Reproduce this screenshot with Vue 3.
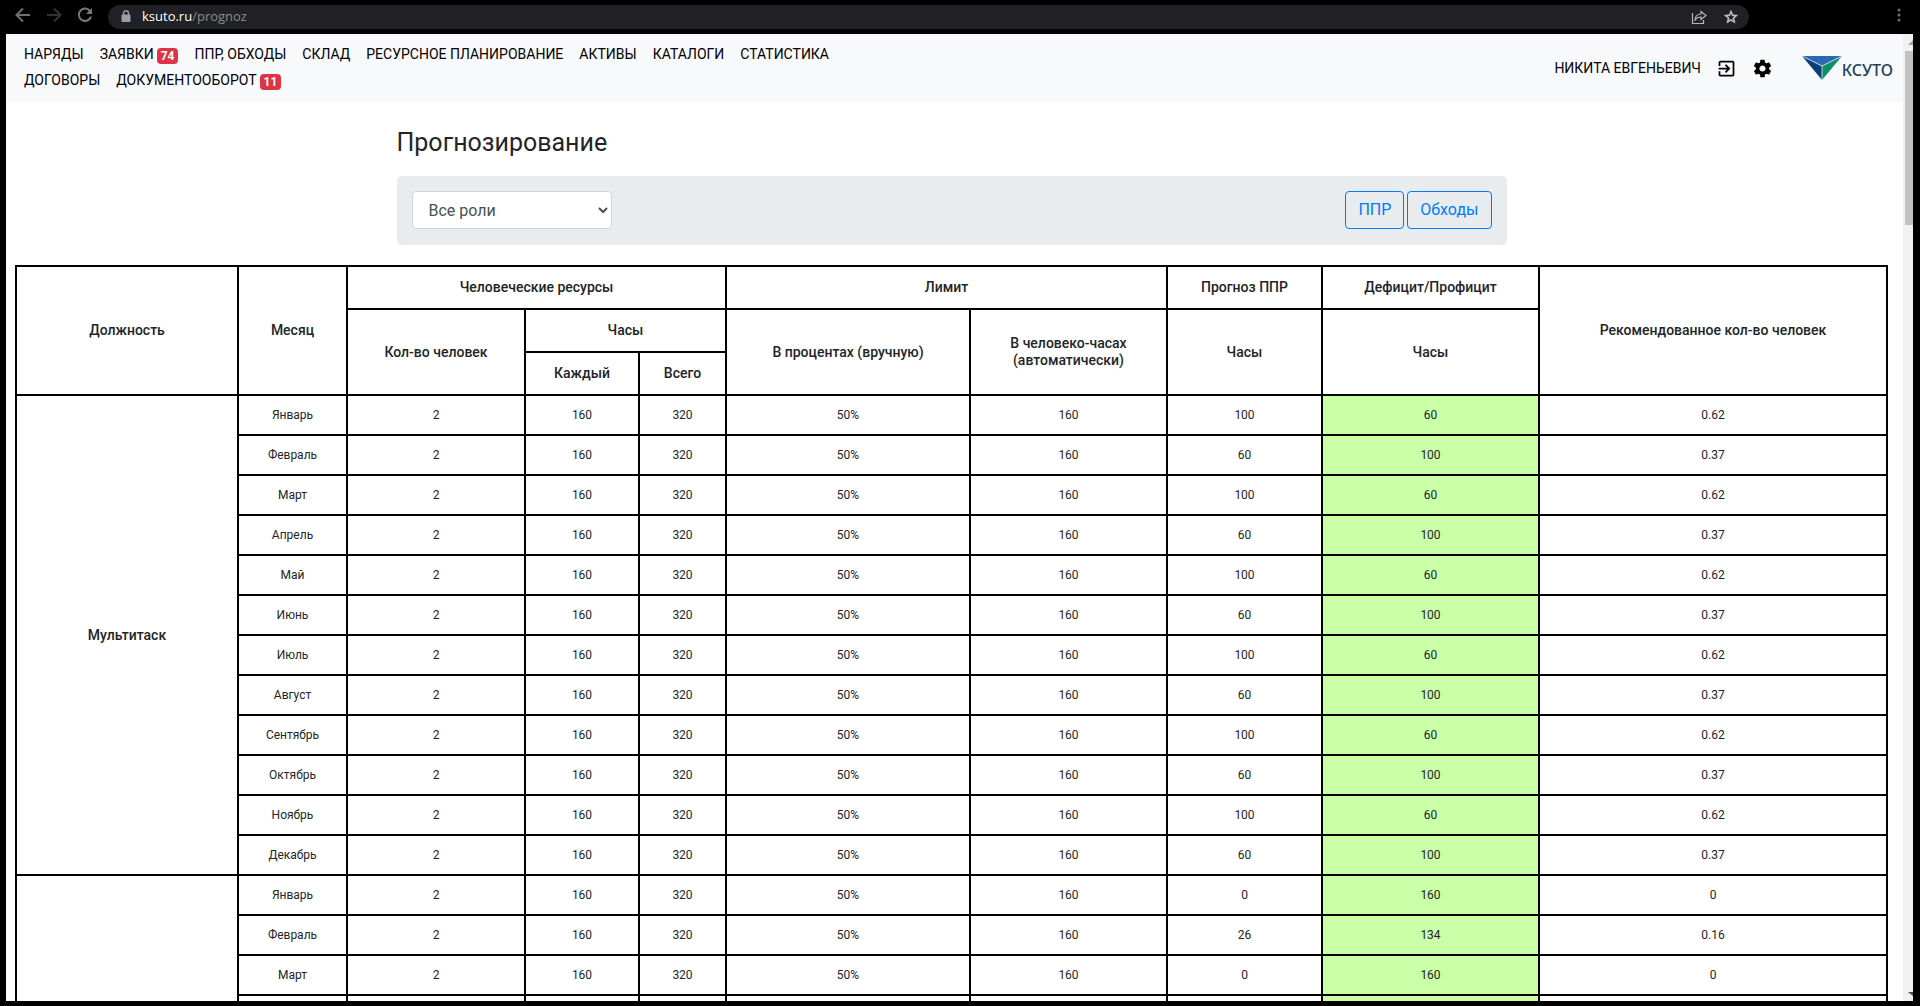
<script setup>
import { ref } from 'vue'

const links = [
  [
    { title: 'НАРЯДЫ' },
    { title: 'ЗАЯВКИ', count: 74 },
    { title: 'ППР, ОБХОДЫ' },
    { title: 'СКЛАД' },
    { title: 'РЕСУРСНОЕ ПЛАНИРОВАНИЕ' },
    { title: 'АКТИВЫ' },
    { title: 'КАТАЛОГИ' },
    { title: 'СТАТИСТИКА' },
  ],
  [{ title: 'ДОГОВОРЫ' }, { title: 'ДОКУМЕНТООБОРОТ', count: 11 }],
]

const role = ref('all')

const months = ['Январь', 'Февраль', 'Март', 'Апрель', 'Май', 'Июнь', 'Июль', 'Август', 'Сентябрь', 'Октябрь', 'Ноябрь', 'Декабрь']

// month, people, hours each, hours total, limit %, limit hours, planned hours, balance, advised people
const makeRow = (month, plan, advice) => [month, 2, 160, 320, '50%', 160, plan, 160 - plan, advice]
const emptyRow = Array(9).fill('')
const BALANCE = 7

const groups = [
  {
    title: 'Мультитаск',
    rows: months.map((m, i) => (i % 2 ? makeRow(m, 60, '0.37') : makeRow(m, 100, '0.62'))),
  },
  {
    title: '',
    rows: [makeRow('Январь', 0, '0'), makeRow('Февраль', 26, '0.16'), makeRow('Март', 0, '0'), emptyRow],
  },
]
</script>

<template>
  <div class="browser">
    <header class="chrome">
      <button class="tool" type="button" aria-label="Назад">
        <svg width="16" height="16" viewBox="0 0 16 16" fill="none" stroke="#6f7072" stroke-width="2"><path d="M15 8H2M8 1.5L1.5 8 8 14.5" /></svg>
      </button>
      <button class="tool" type="button" aria-label="Вперёд">
        <svg width="16" height="16" viewBox="0 0 16 16" fill="none" stroke="#323335" stroke-width="2"><path d="M1 8h13M8 1.500L14.500 8 8 14.500" /></svg>
      </button>
      <button class="tool" type="button" aria-label="Обновить">
        <svg width="16" height="16" viewBox="0 0 16 16"><path d="M13.200 4.200A6.200 6.200 0 1 0 14 9.600" fill="none" stroke="#77787a" stroke-width="2" /><path d="M15 1v6H9z" fill="#77787a" /></svg>
      </button>
      <div class="address">
        <svg class="lock" width="10" height="13" viewBox="0 0 10 13"><path d="M2.500 5V3.300a2.500 2.500 0 0 1 5 0V5" fill="none" stroke="#9aa0a6" stroke-width="1.400" /><rect x="0.500" y="4.500" width="9" height="7.500" rx="1" fill="#9aa0a6" /></svg>
        <span class="url"><span class="host">ksuto.ru</span>/prognoz</span>
        <button class="tool share" type="button" aria-label="Поделиться">
          <svg width="16" height="15" viewBox="0 0 16 15" fill="none" stroke="#b4b6b8" stroke-width="1.200"><path d="M1.500 3v10.500h11V10" /><path d="M4 10c.4-4 2.500-6 6-6V1.500L15 5.500l-5 4V7C7.500 7 5.500 8 4 10z" /></svg>
        </button>
        <button class="tool star" type="button" aria-label="В закладки">
          <svg width="16" height="16" viewBox="0 0 24 24" fill="#c6c8ca"><path d="M22 9.240l-7.190-.62L12 2 9.190 8.630 2 9.240l5.460 4.730L5.820 21 12 17.270 18.180 21l-1.630-7.030L22 9.240zM12 15.400l-3.760 2.270 1-4.280-3.320-2.880 4.380-.38L12 6.100l1.710 4.040 4.380.38-3.320 2.880 1 4.280L12 15.400z" stroke="#c6c8ca" stroke-width=".8" /></svg>
        </button>
      </div>
      <button class="tool" type="button" aria-label="Меню">
        <svg width="4" height="14" viewBox="0 0 4 14" fill="#6f7072"><circle cx="2" cy="2" r="1.500" /><circle cx="2" cy="7" r="1.500" /><circle cx="2" cy="12" r="1.500" /></svg>
      </button>
    </header>

    <div class="viewport">
      <div class="page">
        <div class="navbar">
          <nav class="nav">
            <ul v-for="(line, i) in links" :key="i" class="nav-line">
              <li v-for="link in line" :key="link.title">
                <a href="#">{{ link.title }}<span v-if="link.count" class="badge">{{ link.count }}</span></a>
              </li>
            </ul>
          </nav>
          <div class="account">
            <a href="#">НИКИТА ЕВГЕНЬЕВИЧ</a>
            <a class="icon" href="#" aria-label="Выход">
              <svg width="21" height="21" viewBox="0 0 24 24"><path d="M10.090 15.590L11.500 17l5-5-5-5-1.410 1.410L12.670 11H3v2h9.670l-2.580 2.590zM19 3H5c-1.110 0-2 .9-2 2v4h2V5h14v14H5v-4H3v4c0 1.100.89 2 2 2h14c1.100 0 2-.9 2-2V5c0-1.100-.9-2-2-2z" /></svg>
            </a>
            <a class="icon" href="#" aria-label="Настройки">
              <svg width="21" height="21" viewBox="0 0 24 24"><path d="M19.430 12.980c.04-.32.07-.64.07-.98s-.03-.66-.07-.98l2.110-1.650c.19-.15.24-.42.12-.64l-2-3.460c-.12-.22-.39-.3-.61-.22l-2.490 1c-.52-.4-1.080-.73-1.690-.98l-.38-2.650C14.460 2.180 14.250 2 14 2h-4c-.25 0-.46.18-.49.42l-.38 2.650c-.61.25-1.170.59-1.690.98l-2.490-1c-.23-.09-.49 0-.61.22l-2 3.460c-.13.22-.07.49.12.64l2.110 1.650c-.04.32-.07.65-.07.98s.03.66.07.98l-2.110 1.650c-.19.15-.24.42-.12.64l2 3.460c.12.22.39.3.61.22l2.490-1c.52.4 1.080.73 1.690.98l.38 2.650c.03.24.24.42.49.42h4c.25 0 .46-.18.49-.42l.38-2.650c.61-.25 1.170-.59 1.690-.98l2.490 1c.23.09.49 0 .61-.22l2-3.460c.12-.22.07-.49-.12-.64l-2.110-1.650zM12 15.500c-1.930 0-3.500-1.570-3.500-3.500s1.570-3.500 3.500-3.500 3.500 1.570 3.500 3.500-1.570 3.500-3.500 3.500z" /></svg>
            </a>
            <a class="logo" href="#">
              <svg width="40" height="24" viewBox="0 0 40 24"><path d="M0 0h40L20 10z" fill="#2a6ab5" /><path d="M0 0l20 10v14z" fill="#0b3f7c" /><path d="M40 0L20 10v14z" fill="#0a9163" /><path d="M0 0l20 10L40 0M20 10v14" fill="none" stroke="#dfe8f2" stroke-width=".8" /></svg>
              <span>КСУТО</span>
            </a>
          </div>
        </div>

        <main class="content">
          <section class="container">
            <h1>Прогнозирование</h1>
            <div class="filters">
              <select v-model="role" aria-label="Роль">
                <option value="all">Все роли</option>
              </select>
              <div class="actions">
                <button class="btn" type="button">ППР</button>
                <button class="btn" type="button">Обходы</button>
              </div>
            </div>
          </section>

          <table class="forecast">
            <colgroup>
              <col class="c-post" /><col class="c-month" /><col class="c-people" /><col class="c-each" /><col class="c-total" />
              <col class="c-percent" /><col class="c-limit" /><col class="c-plan" /><col class="c-rest" /><col class="c-advice" />
            </colgroup>
            <thead>
              <tr>
                <th rowspan="3">Должность</th>
                <th rowspan="3">Месяц</th>
                <th colspan="3">Человеческие ресурсы</th>
                <th colspan="2">Лимит</th>
                <th>Прогноз ППР</th>
                <th>Дефицит/Профицит</th>
                <th rowspan="3">Рекомендованное кол-во человек</th>
              </tr>
              <tr>
                <th rowspan="2">Кол-во человек</th>
                <th colspan="2">Часы</th>
                <th rowspan="2">В процентах (вручную)</th>
                <th rowspan="2">В человеко-часах<br />(автоматически)</th>
                <th rowspan="2">Часы</th>
                <th rowspan="2">Часы</th>
              </tr>
              <tr>
                <th>Каждый</th>
                <th>Всего</th>
              </tr>
            </thead>
            <tbody v-for="(group, g) in groups" :key="g">
              <tr v-for="(row, r) in group.rows" :key="r">
                <th v-if="r === 0" :rowspan="group.rows.length">{{ group.title }}</th>
                <td v-for="(cell, c) in row" :key="c" :class="{ surplus: c === BALANCE }">{{ cell }}</td>
              </tr>
            </tbody>
          </table>
        </main>
      </div>

      <div class="scrollbar" aria-hidden="true">
        <svg class="arrow" width="10" height="17" viewBox="0 0 10 17"><path d="M5 11h5V6z" fill="#a3a3a3" /></svg>
        <div class="thumb"></div>
        <svg class="arrow" width="10" height="17" viewBox="0 0 10 17"><path d="M5 8h5v4z" fill="#505050" /></svg>
      </div>
    </div>
  </div>
</template>

<style>
body {
  margin: 0;
  background: #000;
}
</style>

<style scoped>
* {
  box-sizing: border-box;
}
.browser {
  display: flex;
  flex-direction: column;
  height: 100vh;
  padding: 0 7px 5px 6px;
  overflow: hidden;
  background: #000;
  color: #212529;
  font-family: Roboto, "Liberation Sans", sans-serif;
  font-size: 16px;
}
a {
  color: #000;
  text-decoration: none;
}
.chrome {
  display: flex;
  align-items: center;
  flex: none;
  gap: 15px;
  height: 34px;
  padding: 0 12px 4px 9px;
}
.chrome > .tool:last-child {
  margin-left: 133px;
}
.tool {
  display: flex;
  padding: 0;
  border: 0;
  background: none;
}
.address {
  display: flex;
  align-items: center;
  flex: 1;
  height: 24px;
  margin-top: 4px;
  padding: 0 10px 0 13px;
  border-radius: 12px;
  background: #202124;
}
.url {
  flex: 1;
  margin-left: 11px;
  padding-bottom: 2px;
  color: #8b8c8e;
  font: 400 13px/20px "Open Sans", "Noto Sans", sans-serif;
}
.lock {
  margin-bottom: 2px;
}
.host {
  color: #fff;
}
.share {
  margin-right: 16px;
}
.viewport {
  display: flex;
  flex: 1;
  min-height: 0;
  background: #fff;
}
.page {
  flex: 1;
  min-width: 0;
  overflow: hidden;
}
.navbar {
  display: flex;
  align-items: center;
  justify-content: space-between;
  padding: 7px 10px 9px 18px;
  background: #f8f9fb;
  font-size: 14px;
  line-height: 26px;
}
.nav-line {
  display: flex;
  gap: 16px;
  margin: 0;
  padding: 0;
  list-style: none;
}
.nav-line a {
  display: flex;
  align-items: center;
}
.badge {
  margin: 4px 0 0 3px;
  padding: 0 4px;
  border-radius: 4px;
  background: #dc3545;
  color: #fff;
  font-size: 12px;
  font-weight: 700;
  line-height: 16px;
}
.account {
  display: flex;
  align-items: center;
  padding-top: 2px;
}
.icon {
  display: flex;
  margin-left: 15px;
}
.logo {
  display: flex;
  align-items: center;
  margin-left: 29px;
  color: #1d4160;
  font: 500 16px/24px "Noto Sans", sans-serif;
}
.logo span {
  padding-top: 4px;
}
.content {
  padding: 0 15px 0 9px;
}
.container {
  max-width: 1110px;
  margin: 0 auto;
}
h1 {
  margin: 0;
  padding: 26px 0 18px;
  font-size: 25px;
  font-weight: 400;
  line-height: 30px;
}
.filters {
  display: flex;
  align-items: center;
  justify-content: space-between;
  margin-bottom: 20px;
  padding: 15px 15px 16px;
  border-radius: 5px;
  background: #e9ecef;
}
select {
  width: 200px;
  height: 38px;
  padding: 6px 0 6px 12px;
  border: 1px solid #ced4da;
  border-radius: 4px;
  background: #fff;
  color: #495057;
  font: 400 16px/24px Roboto, sans-serif;
}
.actions {
  display: flex;
  gap: 3px;
}
.btn {
  height: 38px;
  padding: 0 12px;
  border: 1px solid #007bff;
  border-radius: 4px;
  background: none;
  color: #007bff;
  font: 400 16px/24px Roboto, sans-serif;
}
.forecast {
  width: 100%;
  table-layout: fixed;
  border-collapse: collapse;
  line-height: 17px;
  text-align: center;
}
.forecast th,
.forecast td {
  padding: 0 8px;
  border: 2px solid #000;
}
.forecast th {
  font-size: 14px;
  font-weight: 500;
}
.forecast td {
  font-size: 12px;
}
.forecast thead tr {
  height: 43px;
}
.forecast tbody tr {
  height: 40px;
}
.forecast .surplus {
  background: #caffa8;
}
.c-post { width: 222px; }
.c-month { width: 109px; }
.c-people { width: 178px; }
.c-each { width: 114px; }
.c-total { width: 87px; }
.c-percent { width: 244px; }
.c-limit { width: 197px; }
.c-plan { width: 155px; }
.c-rest { width: 217px; }
.c-advice { width: 348px; }
.scrollbar {
  display: flex;
  flex-direction: column;
  flex: none;
  width: 10px;
  background: #f1f1f1;
}
.arrow {
  flex: none;
}
.thumb {
  height: 18%;
  margin: 0 0 auto 2px;
  background: #c1c1c1;
}
</style>
